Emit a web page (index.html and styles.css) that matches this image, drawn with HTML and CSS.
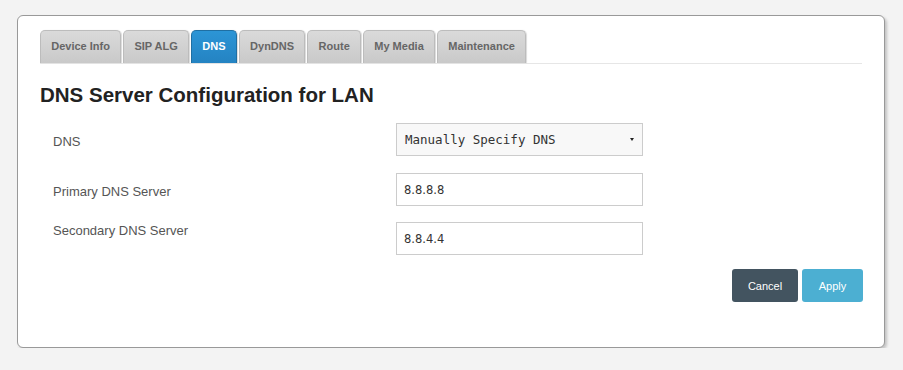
FILE: index.html
```html
<!DOCTYPE html>
<html lang="en">
<head>
    <meta charset="UTF-8">
    <meta name="viewport" content="width=device-width, initial-scale=1.0">
    <title>DNS Server Configuration</title>
    <link rel="stylesheet" href="styles.css">
</head>
<body>
    <div class="panel">
        <ul class="tabs">
            <li class="tab">Device Info</li>
            <li class="tab">SIP ALG</li>
            <li class="tab active">DNS</li>
            <li class="tab">DynDNS</li>
            <li class="tab">Route</li>
            <li class="tab">My Media</li>
            <li class="tab">Maintenance</li>
        </ul>

        <h1>DNS Server Configuration for LAN</h1>

        <div class="form">
            <div class="row">
                <label class="label" for="dnsMode">DNS</label>
                <div class="select" id="dnsMode">
                    <span>Manually Specify DNS</span>
                    <span class="caret"></span>
                </div>
            </div>
            <div class="row row-tight">
                <label class="label" for="primary">Primary DNS Server</label>
                <input class="field" type="text" id="primary" value="8.8.8.8">
            </div>
            <div class="row">
                <label class="label label-top" for="secondary">Secondary DNS Server</label>
                <input class="field" type="text" id="secondary" value="8.8.4.4">
            </div>
        </div>

        <div class="actions">
            <button class="btn btn-cancel">Cancel</button>
            <button class="btn btn-apply">Apply</button>
        </div>
    </div>
</body>
</html>
```
FILE: styles.css
```css
body {
    margin: 0;
    padding: 15px 0 0 17px;
    background-color: #f3f3f3;
    font-family: "Liberation Sans", Arial, sans-serif;
}
.panel {
    box-sizing: border-box;
    width: 868px;
    height: 333px;
    padding: 14px 22px 0 22px;
    background: white;
    border: 1px solid #999;
    border-radius: 6px;
    box-shadow: 2px 2px 3px rgba(0, 0, 0, 0.2);
}
.tabs {
    display: flex;
    gap: 2px;
    margin: 0;
    padding: 0;
    list-style: none;
    border-bottom: 1px solid #e6e6e6;
}
.tab {
    box-sizing: border-box;
    height: 33px;
    line-height: 31px;
    padding: 0 10.25px;
    font-size: 11px;
    font-weight: bold;
    color: #666;
    background: linear-gradient(#dadada, #c9c9c9);
    border: 1px solid #bcbcbc;
    border-bottom: none;
    border-radius: 5px 5px 0 0;
    box-shadow: 1px 0 1px rgba(0, 0, 0, 0.15);
}
.tab.active {
    color: white;
    background: linear-gradient(#2c95d6, #2483c2);
    border-color: #1f6fa3;
}
h1 {
    margin: 18px 0 0 0;
    font-size: 20.5px;
    line-height: 26px;
    color: #222;
}
.form {
    margin-top: 15px;
    padding-left: 13px;
}
.row {
    display: flex;
    align-items: flex-start;
    margin-bottom: 17px;
}
.row-tight {
    margin-bottom: 16px;
}
.label {
    width: 343px;
    padding-top: 11px;
    font-size: 13px;
    line-height: 16px;
    color: #555;
}
.label-top {
    padding-top: 1px;
}
.select, .field {
    box-sizing: border-box;
    width: 247px;
    height: 33px;
    border: 1px solid #ccc;
}
.select {
    display: flex;
    align-items: center;
    justify-content: space-between;
    padding: 0 8px 0 8px;
    background: #f8f8f8;
    font-family: "DejaVu Sans Mono", monospace;
    font-size: 12.5px;
    color: #333;
}
.caret {
    width: 0;
    height: 0;
    border-left: 2px solid transparent;
    border-right: 2px solid transparent;
    border-top: 3px solid #222;
}
.field {
    padding: 0 7px;
    font-family: "DejaVu Sans", sans-serif;
    font-size: 11.5px;
    color: #333;
    background: white;
}
.actions {
    display: flex;
    justify-content: flex-end;
    gap: 4px;
    margin: -3px -1px 0 0;
}
.btn {
    height: 33px;
    border: none;
    border-radius: 3px;
    font-family: "Liberation Sans", Arial, sans-serif;
    font-size: 11px;
    color: white;
    cursor: pointer;
}
.btn-cancel {
    width: 66px;
    background-color: #435460;
}
.btn-apply {
    width: 61px;
    background-color: #4cafd2;
}
```
